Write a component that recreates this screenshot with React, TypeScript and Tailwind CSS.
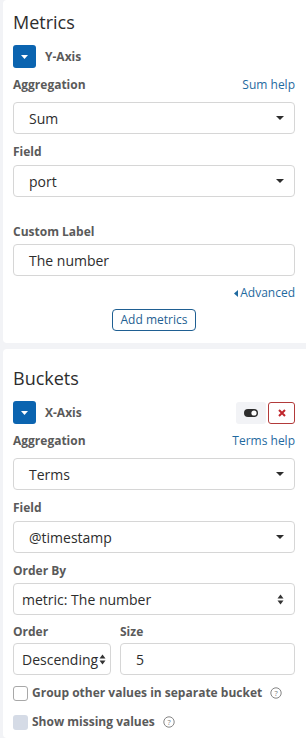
import React from 'react';

const font = { fontFamily: '"Open Sans", "Noto Sans", Arial, sans-serif' };

const Caret = () => (
  <svg width="8" height="4" viewBox="0 0 8 4" className="shrink-0">
    <path d="M0 0h8L4 4z" fill="#2d2d2d" />
  </svg>
);

const UpDown = () => (
  <svg width="7" height="11" viewBox="0 0 7 11" className="shrink-0">
    <path d="M0.5 4.5L3.5 0.5L6.5 4.5z M0.5 6.5h6L3.5 10.5z" fill="#333" />
  </svg>
);

const Label = ({ children }: { children: React.ReactNode }) => (
  <div className="text-[12px] font-bold text-[#5a5a5a] leading-[16px]">{children}</div>
);

const Help = () => (
  <svg width="12" height="12" viewBox="0 0 12 12" className="ml-[4px] shrink-0">
    <circle cx="6" cy="6" r="5.2" fill="none" stroke="#777" strokeWidth="0.9" />
    <text x="6" y="8.7" textAnchor="middle" fontSize="7.5" fill="#777" fontFamily="Open Sans, Arial, sans-serif">
      ?
    </text>
  </svg>
);

const Select = ({ value, native = false }: { value: string; native?: boolean }) => (
  <div
    className={`flex items-center justify-between h-[32px] border border-[#d6d6d6] rounded-[4px] bg-white pr-[10px] ${
      native ? 'pl-[8px]' : 'pl-[15px]'
    }`}
  >
    <span className="text-[14px] text-[#2d2d2d]">{value}</span>
    {native ? <UpDown /> : <Caret />}
  </div>
);

const Toggle = () => (
  <div className="w-[23px] h-[23px] rounded-[3px] bg-[#0b64b0] flex items-center justify-center">
    <svg width="7" height="4" viewBox="0 0 7 4">
      <path d="M0 0h7L3.5 4z" fill="#fff" />
    </svg>
  </div>
);

export default function App() {
  return (
    <div className="w-[306px] h-[738px] bg-[#f2f3f6] overflow-hidden" style={font}>
      {/* Metrics */}
      <div className="ml-[3px] bg-white rounded-l-[4px] pl-[10px] pr-[11px] pt-[11px] pb-[12px]">
        <h2 className="text-[18px] leading-[22px] text-[#2d2d2d]">Metrics</h2>
        <div className="flex items-center gap-[9px] mt-[12px]">
          <Toggle />
          <span className="text-[12px] font-bold text-[#5a5a5a]">Y-Axis</span>
        </div>
        <div className="flex items-center justify-between mt-[9px] h-[16px]">
          <Label>Aggregation</Label>
          <span className="text-[12px] text-[#1f6aa0] leading-[16px]">Sum help</span>
        </div>
        <div className="mt-[9px]">
          <Select value="Sum" />
        </div>
        <div className="mt-[10px]">
          <Label>Field</Label>
        </div>
        <div className="mt-[5px]">
          <Select value="port" />
        </div>
        <div className="mt-[27px]">
          <Label>Custom Label</Label>
        </div>
        <div className="mt-[4px] h-[32px] border border-[#d6d6d6] rounded-[4px] flex items-center pl-[15px]">
          <span className="text-[14px] text-[#2d2d2d]">The number</span>
        </div>
        <div className="flex justify-end items-center gap-[2px] mt-[9px] h-[16px] text-[12px] text-[#1f6aa0] leading-[16px]">
          <svg width="4" height="7" viewBox="0 0 4 7">
            <path d="M4 0v7L0 3.5z" fill="#1f6aa0" />
          </svg>
          Advanced
        </div>
        <div className="flex justify-center mt-[8px]">
          <div className="h-[22px] px-[8px] border border-[#1f5f92] rounded-[4px] text-[12px] text-[#1f5f92] flex items-center">
            Add metrics
          </div>
        </div>
      </div>

      {/* Buckets */}
      <div className="ml-[3px] mt-[6px] bg-white rounded-l-[4px] pl-[10px] pr-[11px] pt-[18px] pb-[8px]">
        <h2 className="text-[18px] leading-[22px] text-[#2d2d2d]">Buckets</h2>
        <div className="flex items-center justify-between mt-[12px]">
          <div className="flex items-center gap-[9px]">
            <Toggle />
            <span className="text-[12px] font-bold text-[#5a5a5a]">X-Axis</span>
          </div>
          <div className="flex items-center gap-[2px]">
            <div className="w-[30px] h-[22px] rounded-[3px] bg-[#f2f3f6] flex items-center justify-center">
              <svg width="14" height="8" viewBox="0 0 14 8">
                <rect x="0" y="0" width="14" height="8" rx="4" fill="#2d2d2d" />
                <circle cx="10" cy="4" r="2.6" fill="#fff" />
              </svg>
            </div>
            <div className="w-[27px] h-[22px] rounded-[3px] border border-[#b23a3a] bg-white flex items-center justify-center">
              <svg width="8" height="8" viewBox="0 0 8 8">
                <path d="M1 1l6 6M7 1L1 7" stroke="#c0262c" strokeWidth="2" />
              </svg>
            </div>
          </div>
        </div>
        <div className="flex items-center justify-between mt-[9px] h-[16px]">
          <Label>Aggregation</Label>
          <span className="text-[12px] text-[#1f6aa0] leading-[16px]">Terms help</span>
        </div>
        <div className="mt-[9px]">
          <Select value="Terms" />
        </div>
        <div className="mt-[10px]">
          <Label>Field</Label>
        </div>
        <div className="mt-[5px]">
          <Select value="@timestamp" />
        </div>
        <div className="mt-[10px]">
          <Label>Order By</Label>
        </div>
        <div className="mt-[4px]">
          <Select value="metric: The number" native />
        </div>
        <div className="flex gap-[9px] mt-[9px]">
          <div className="w-[98px] shrink-0">
            <Label>Order</Label>
            <div className="mt-[3px] h-[32px] border border-[#d6d6d6] rounded-[4px] flex items-center pl-[8px] pr-[4px] overflow-hidden">
              <span className="text-[14px] text-[#2d2d2d] whitespace-nowrap overflow-hidden w-[77px] shrink-0">
                Descending
              </span>
              <UpDown />
            </div>
          </div>
          <div className="flex-1">
            <Label>Size</Label>
            <div className="mt-[3px] h-[32px] border border-[#d6d6d6] rounded-[4px] flex items-center pl-[15px]">
              <span className="text-[14px] text-[#2d2d2d]">5</span>
            </div>
          </div>
        </div>
        <div className="flex items-center gap-[4px] mt-[10px] h-[16px]">
          <div className="w-[15px] h-[15px] border border-[#a8a8a8] rounded-[3px] bg-white shrink-0" />
          <span className="text-[12px] font-bold text-[#5a5a5a] leading-[16px] whitespace-nowrap">
            Group other values in separate bucket
          </span>
          <Help />
        </div>
        <div className="flex items-center gap-[4px] mt-[13px] h-[16px]">
          <div className="w-[15px] h-[15px] rounded-[3px] bg-[#d5dbe6] shrink-0" />
          <span className="text-[12px] font-bold text-[#5a5a5a] leading-[16px] whitespace-nowrap">
            Show missing values
          </span>
          <Help />
        </div>
      </div>
    </div>
  );
}
